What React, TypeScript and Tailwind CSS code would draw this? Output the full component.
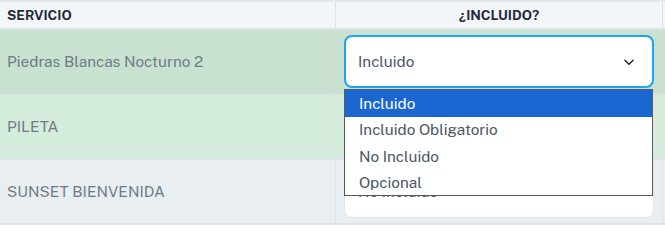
import React from "react";

function Chevron() {
  return (
    <svg width="14" height="14" viewBox="0 0 24 24" fill="none" stroke="#1f2937" strokeWidth="2.6" strokeLinecap="round" strokeLinejoin="round">
      <path d="M5 9l7 7 7-7" />
    </svg>
  );
}

export default function App() {
  const font = { fontFamily: "'Public Sans', Inter, 'Noto Sans', sans-serif" };
  return (
    <div className="relative w-[665px] h-[240px] bg-white overflow-hidden" style={font}>
      <div className="grid grid-cols-[336px_327px_1fr] border-t-2 border-[#e3e7eb]">
        {/* header */}
        <div className="h-[28px] bg-[#f3f6f9] border-r border-[#dfe3e7] border-b-2 border-b-[#dfe3e7] flex items-center pl-[7px] text-[13.5px] font-bold text-[#1e2939]">SERVICIO</div>
        <div className="h-[28px] bg-[#f3f6f9] border-r border-[#dfe3e7] border-b-2 border-b-[#dfe3e7] flex items-center justify-center text-[13.5px] font-bold text-[#1e2939]">¿INCLUIDO?</div>
        <div className="h-[28px] bg-[#f3f6f9] border-b-2 border-[#dfe3e7]"></div>

        {/* row 1 */}
        <div className="h-[65px] bg-[#c8e1d0] border-r border-[#d6dbd8] border-b-2 border-b-[#d6dfda] flex items-center pl-[7px] text-[15.3px] text-[#6f7c86]">Piedras Blancas Nocturno 2</div>
        <div className="h-[65px] bg-[#c8e1d0] border-r border-[#d6dbd8] border-b-2 border-b-[#d6dfda] flex items-center px-[8px]">
          <div className="w-full h-[53px] bg-white border-2 border-[#1aa7f0] rounded-[8px] flex items-center justify-between pl-[12px] pr-[16px] text-[15.3px] text-[#4b5563]">
            <span>Incluido</span>
            <Chevron />
          </div>
        </div>
        <div className="h-[65px] bg-[#c8e1d0] border-b-2 border-[#d6dfda]"></div>

        {/* row 2 */}
        <div className="h-[65px] bg-[#d4ecdb] border-r border-[#dbe3de] border-b-2 border-b-[#dde3e6] flex items-center pl-[7px] text-[15.3px] text-[#6f7c86]">PILETA</div>
        <div className="h-[65px] bg-[#d4ecdb] border-r border-[#dbe3de] border-b-2 border-b-[#dde3e6] flex items-center px-[8px]">
          <div className="w-full h-[53px] bg-white border border-[#e2e6ea] rounded-[8px] flex items-center pl-[13px] text-[15.3px] text-[#4b5563]">Incluido</div>
        </div>
        <div className="h-[65px] bg-[#d4ecdb] border-b-2 border-[#dde3e6]"></div>

        {/* row 3 */}
        <div className="h-[65px] bg-[#e8eef1] border-r border-[#dde3e6] border-b-2 border-b-[#dde3e6] flex items-center pl-[7px] text-[15.3px] text-[#6f7c86]">SUNSET BIENVENIDA</div>
        <div className="h-[65px] bg-[#e8eef1] border-r border-[#dde3e6] border-b-2 border-b-[#dde3e6] flex items-center px-[8px]">
          <div className="w-full h-[53px] bg-white border border-[#e2e6ea] rounded-[8px] flex items-center pl-[13px] text-[15.3px] text-[#4b5563]">No Incluido</div>
        </div>
        <div className="h-[65px] bg-[#e8eef1] border-b-2 border-[#dde3e6]"></div>
      </div>

      {/* open dropdown list */}
      <div className="absolute left-[344px] top-[89px] w-[309px] bg-white border border-[#5a5a5a] text-[15.3px] text-[#4b5563]">
        <div className="h-[26.5px] bg-[#1a67d2] text-white flex items-center pl-[14px]">Incluido</div>
        <div className="h-[26.5px] flex items-center pl-[14px]">Incluido Obligatorio</div>
        <div className="h-[26px] flex items-center pl-[14px]">No Incluido</div>
        <div className="h-[26px] flex items-center pl-[14px]">Opcional</div>
      </div>
    </div>
  );
}
